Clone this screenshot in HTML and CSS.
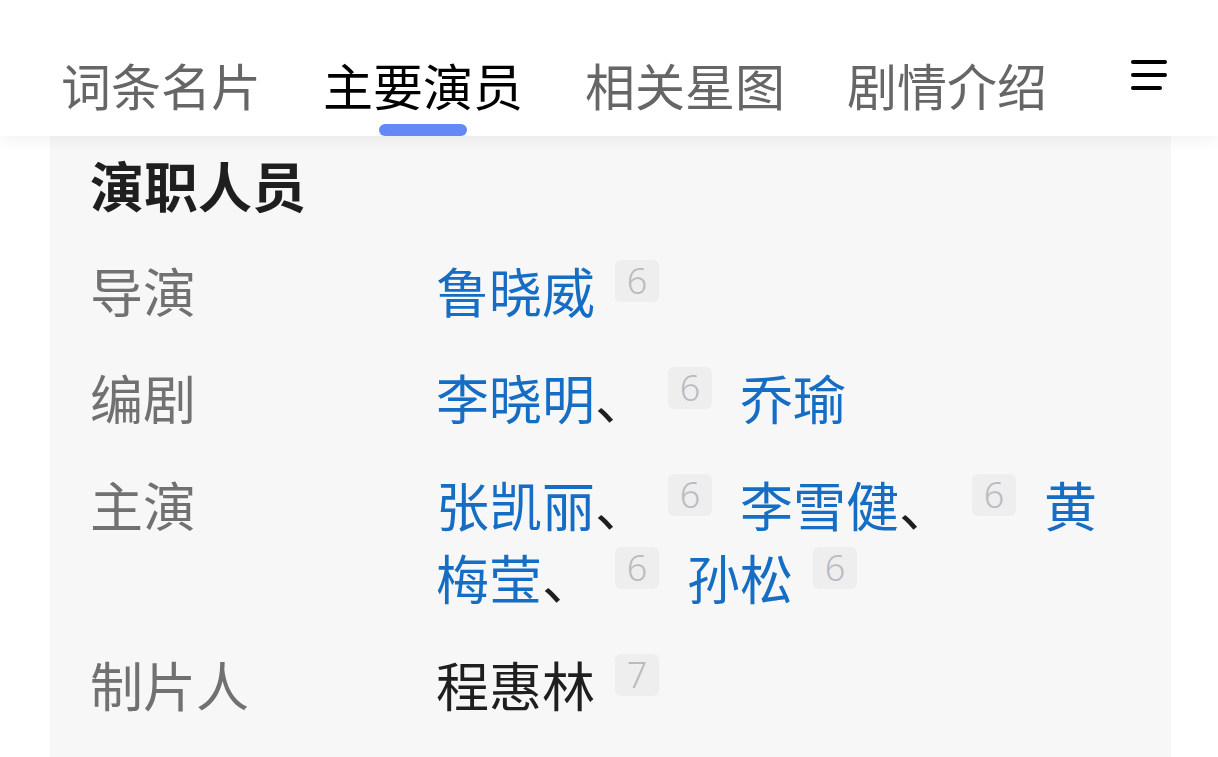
FILE: index.html
```html
<!DOCTYPE html>
<html lang="zh-CN">
<head>
    <meta charset="UTF-8">
    <meta name="viewport" content="width=device-width, initial-scale=1.0">
    <title>主要演员</title>
    <link rel="stylesheet" href="styles.css">
</head>
<body>
    <div class="tabbar">
        <div class="tab"><span class="tab-text">词条名片</span></div>
        <div class="tab active"><span class="tab-text">主要演员</span><span class="indicator"></span></div>
        <div class="tab"><span class="tab-text">相关星图</span></div>
        <div class="tab"><span class="tab-text">剧情介绍</span></div>
        <div class="menu">
            <svg width="36" height="32" viewBox="0 0 36 32">
                <line x1="2" y1="4" x2="34" y2="4" stroke="#000" stroke-width="4" stroke-linecap="round"/>
                <line x1="2" y1="17" x2="34" y2="17" stroke="#000" stroke-width="4" stroke-linecap="round"/>
                <line x1="2" y1="30" x2="29" y2="30" stroke="#000" stroke-width="4" stroke-linecap="round"/>
            </svg>
        </div>
    </div>

    <div class="panel">
        <h2 class="panel-title">演职人员</h2>
        <div class="info">
            <div class="label">导演</div>
            <div class="value"><a class="name">鲁晓威</a><span class="badge">6</span></div>

            <div class="label">编剧</div>
            <div class="value"><a class="name">李晓明</a>、<span class="badge">6</span><a class="name">乔瑜</a></div>

            <div class="label">主演</div>
            <div class="value"><a class="name">张凯丽</a>、<span class="badge">6</span><a class="name">李雪健</a>、<span class="badge">6</span><a class="name">黄梅莹</a>、<span class="badge">6</span><a class="name">孙松</a><span class="badge">6</span></div>

            <div class="label">制片人</div>
            <div class="value"><span class="plain">程惠林</span><span class="badge">7</span></div>
        </div>
    </div>
</body>
</html>
```

FILE: styles.css
```css
body {
    margin: 0;
    background-color: #ffffff;
    font-family: "Noto Sans CJK SC", "Noto Sans", sans-serif;
}

.tabbar {
    display: flex;
    height: 136px;
    padding-left: 61px;
    background-color: #ffffff;
    box-shadow: 0 4px 16px rgba(0, 0, 0, 0.06);
    position: relative;
    z-index: 1;
}

.tab {
    display: flex;
    flex-direction: column;
    align-items: center;
    padding-top: 48px;
    margin-right: 62px;
}

.tab-text {
    font-size: 50px;
    line-height: 72px;
    color: #666666;
    white-space: nowrap;
}

.tab.active .tab-text {
    color: #000000;
}

.indicator {
    width: 88px;
    height: 12px;
    margin-top: 4px;
    border-radius: 6px;
    background-color: #6489f6;
}

.menu {
    margin-left: auto;
    margin-right: 51px;
    padding-top: 58px;
}

.panel {
    margin: 0 47px 0 50px;
    padding: 12px 40px 60px;
    background-color: #f7f7f7;
    min-height: 600px;
}

.panel-title {
    margin: 0 0 33px;
    font-size: 54px;
    line-height: 73px;
    font-weight: bold;
    color: #1f1f1f;
}

.info {
    display: grid;
    grid-template-columns: 346px 1fr;
    row-gap: 34px;
    font-size: 53px;
    line-height: 73px;
}

.label {
    color: #717171;
}

.value {
    color: #1f1f1f;
}

.name {
    color: #156ec3;
    text-decoration: none;
}

.plain {
    color: #1f1f1f;
}

.badge {
    display: inline-block;
    vertical-align: top;
    width: 44px;
    height: 42px;
    margin: 6px 28px 0 20px;
    border-radius: 6px;
    background-color: #eeeeef;
    color: #b9bbc1;
    font-family: "Noto Sans", sans-serif;
    font-size: 36px;
    font-weight: 300;
    line-height: 42px;
    text-align: center;
}
```
